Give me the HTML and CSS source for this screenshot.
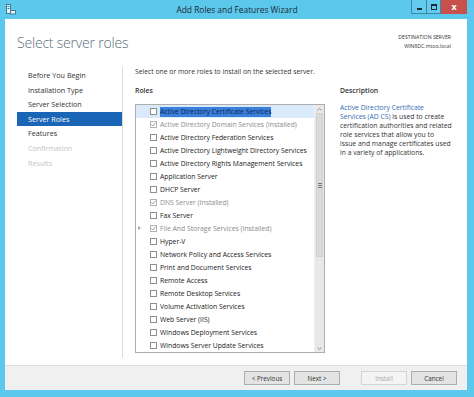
FILE: index.html
```html
<!DOCTYPE html>
<html lang="en">
<head>
    <meta charset="UTF-8">
    <title>Add Roles and Features Wizard</title>
    <link rel="stylesheet" href="styles.css">
</head>
<body>
    <div class="window">
        <div class="titlebar">
            <svg class="app-icon" width="10" height="11" viewBox="0 0 10 11">
                <rect x="0.5" y="0.5" width="4" height="9" fill="#e8f4fa" stroke="#3b7c99" stroke-width="1"/>
                <rect x="1.5" y="2" width="2" height="1" fill="#3b7c99"/>
                <rect x="1.5" y="4" width="2" height="1" fill="#3b7c99"/>
                <rect x="4.5" y="6.5" width="5" height="3.5" fill="#e8f4fa" stroke="#3b7c99" stroke-width="1"/>
            </svg>
            <div class="title">Add Roles and Features Wizard</div>
            <div class="controls">
                <span class="ctl ctl-min"><i></i></span>
                <span class="ctl ctl-max"><i></i></span>
                <span class="ctl ctl-close">x</span>
            </div>
        </div>

        <div class="client">
            <div class="header">
                <h1>Select server roles</h1>
                <div class="dest">
                    <div>DESTINATION SERVER</div>
                    <div>WIN8DC.mtoo.local</div>
                </div>
            </div>

            <div class="main">
                <ul class="steps">
                    <li>Before You Begin</li>
                    <li>Installation Type</li>
                    <li>Server Selection</li>
                    <li class="active">Server Roles</li>
                    <li>Features</li>
                    <li class="disabled">Confirmation</li>
                    <li class="disabled">Results</li>
                </ul>

                <div class="content">
                    <p class="intro">Select one or more roles to install on the selected server.</p>
                    <div class="columns">
                        <div class="roles">
                            <h2>Roles</h2>
                            <div class="listbox">
                                <ul class="role-list">
                                    <li class="selected"><span class="cb"></span><span class="label">Active Directory Certificate Services</span></li>
                                    <li class="installed"><span class="cb checked"><svg width="7" height="7" viewBox="0 0 7 7"><path d="M1.2 3.4 L2.8 5 L5.8 1.6" fill="none" stroke="#9a9a9a" stroke-width="1"/></svg></span><span class="label">Active Directory Domain Services (Installed)</span></li>
                                    <li><span class="cb"></span><span class="label">Active Directory Federation Services</span></li>
                                    <li><span class="cb"></span><span class="label">Active Directory Lightweight Directory Services</span></li>
                                    <li><span class="cb"></span><span class="label">Active Directory Rights Management Services</span></li>
                                    <li><span class="cb"></span><span class="label">Application Server</span></li>
                                    <li><span class="cb"></span><span class="label">DHCP Server</span></li>
                                    <li class="installed"><span class="cb checked"><svg width="7" height="7" viewBox="0 0 7 7"><path d="M1.2 3.4 L2.8 5 L5.8 1.6" fill="none" stroke="#9a9a9a" stroke-width="1"/></svg></span><span class="label">DNS Server (Installed)</span></li>
                                    <li><span class="cb"></span><span class="label">Fax Server</span></li>
                                    <li class="installed"><span class="expander"></span><span class="cb checked"><svg width="7" height="7" viewBox="0 0 7 7"><path d="M1.2 3.4 L2.8 5 L5.8 1.6" fill="none" stroke="#9a9a9a" stroke-width="1"/></svg></span><span class="label">File And Storage Services (Installed)</span></li>
                                    <li><span class="cb"></span><span class="label">Hyper-V</span></li>
                                    <li><span class="cb"></span><span class="label">Network Policy and Access Services</span></li>
                                    <li><span class="cb"></span><span class="label">Print and Document Services</span></li>
                                    <li><span class="cb"></span><span class="label">Remote Access</span></li>
                                    <li><span class="cb"></span><span class="label">Remote Desktop Services</span></li>
                                    <li><span class="cb"></span><span class="label">Volume Activation Services</span></li>
                                    <li><span class="cb"></span><span class="label">Web Server (IIS)</span></li>
                                    <li><span class="cb"></span><span class="label">Windows Deployment Services</span></li>
                                    <li><span class="cb"></span><span class="label">Windows Server Update Services</span></li>
                                </ul>
                                <div class="scrollbar">
                                    <div class="arrow">
                                        <svg width="5" height="3" viewBox="0 0 5 3"><path d="M0.5 2.5 L2.5 0.5 L4.5 2.5" fill="none" stroke="#7a7a7a" stroke-width="0.8"/></svg>
                                    </div>
                                    <div class="track">
                                        <div class="thumb"><span class="grip"></span></div>
                                    </div>
                                    <div class="arrow">
                                        <svg width="5" height="3" viewBox="0 0 5 3"><path d="M0.5 0.5 L2.5 2.5 L4.5 0.5" fill="none" stroke="#7a7a7a" stroke-width="0.8"/></svg>
                                    </div>
                                </div>
                            </div>
                        </div>
                        <div class="description">
                            <h2>Description</h2>
                            <p><a href="#">Active Directory Certificate<br>Services (AD CS)</a> is used to create<br>certification authorities and related<br>role services that allow you to<br>issue and manage certificates used<br>in a variety of applications.</p>
                        </div>
                    </div>
                </div>
            </div>

            <div class="footer">
                <button class="btn">&lt; Previous</button>
                <button class="btn">Next &gt;</button>
                <button class="btn btn-disabled install">Install</button>
                <button class="btn">Cancel</button>
            </div>
        </div>
    </div>
</body>
</html>
```

FILE: styles.css
```css
body {
    margin: 0;
    padding: 0;
    font-family: 'Open Sans', 'Noto Sans', sans-serif;
    color: #222;
}
.window {
    width: 474px;
    height: 397px;
    background-color: #5cc8ec;
    display: flex;
    flex-direction: column;
    overflow: hidden;
}
.titlebar {
    height: 19px;
    display: grid;
    grid-template-columns: 1fr auto 1fr;
    align-items: center;
}
.app-icon {
    margin-left: 6px;
}
.title {
    font-size: 8.4px;
    color: #1b2a33;
}
.controls {
    justify-self: end;
    align-self: start;
    display: flex;
    margin-right: 7px;
    height: 14px;
}
.ctl {
    display: flex;
    align-items: center;
    justify-content: center;
    height: 14px;
    box-sizing: border-box;
}
.ctl-min, .ctl-max {
    width: 15px;
    background-color: #62cbee;
    border: 1px solid #3a86a6;
    border-top: none;
}
.ctl-min {
    border-right: none;
}
.ctl-min i {
    display: block;
    width: 5px;
    height: 2px;
    margin-top: 4px;
    background-color: #1c2b33;
}
.ctl-max i {
    display: block;
    width: 4px;
    height: 3px;
    border: 1px solid #1c2b33;
    border-top-width: 2px;
}
.ctl-close {
    width: 26px;
    background-color: #c9514c;
    color: white;
    font-size: 9px;
    font-weight: bold;
    line-height: 12px;
}
.client {
    flex: 1;
    margin: 0 7px 7px 5px;
    background-color: white;
    display: flex;
    flex-direction: column;
}
.header {
    height: 43px;
    display: flex;
    justify-content: space-between;
    align-items: flex-start;
    padding: 0 16px 0 12px;
}
.header h1 {
    margin: 15px 0 0;
    font-size: 14px;
    font-weight: 300;
    color: #5d6d7a;
    line-height: 18px;
    letter-spacing: -0.2px;
}
.dest {
    margin-top: 14px;
    text-align: right;
    font-size: 5.2px;
    line-height: 8.5px;
    color: #333;
}
.main {
    flex: 1;
    display: flex;
}
.steps {
    list-style: none;
    width: 118px;
    box-sizing: border-box;
    margin: 5px 0 7px;
    padding: 1px 0 0 12px;
    border-right: 1px solid #dcdcdc;
    font-size: 7.2px;
}
.steps li {
    line-height: 14.6px;
    padding-left: 11px;
    color: #333;
}
.steps li.active {
    background-color: #1a65b5;
    color: white;
}
.steps li.disabled {
    color: #c4c4c4;
}
.content {
    flex: 1;
    padding-left: 12px;
    font-size: 6.8px;
}
.intro {
    margin: 4.5px 0 0;
    line-height: 9px;
    color: #333;
}
.columns {
    display: flex;
    gap: 15px;
    margin-top: 10px;
}
.roles h2, .description h2 {
    margin: 0;
    font-size: 6.9px;
    font-weight: 600;
    line-height: 9px;
    color: #333;
}
.listbox {
    margin-top: 9.5px;
    width: 190px;
    height: 249px;
    box-sizing: border-box;
    border: 1px solid #adadad;
    display: flex;
}
.role-list {
    list-style: none;
    margin: 0;
    padding: 0;
    flex: 1;
}
.role-list li {
    height: 13px;
    display: flex;
    align-items: center;
    padding-left: 14px;
    position: relative;
    color: #222;
}
.role-list li.selected {
    background-color: #dbeafb;
}
.role-list li.selected .label {
    background-color: #3a7fd9;
    color: #0d1f56;
}
.role-list li.installed {
    color: #8c8c8c;
}
.cb {
    width: 7px;
    height: 7px;
    box-sizing: border-box;
    border: 1px solid #8f8f8f;
    background-color: white;
    margin-right: 3px;
    flex-shrink: 0;
    display: flex;
}
.cb.checked {
    border-color: #b4b4b4;
}
.cb svg {
    margin: -1px;
}
.label {
    white-space: nowrap;
    line-height: 10px;
}
.expander {
    position: absolute;
    left: 2px;
    top: 4px;
    width: 0;
    height: 0;
    border-top: 2.5px solid transparent;
    border-bottom: 2.5px solid transparent;
    border-left: 3px solid #a6a6a6;
}
.scrollbar {
    width: 9px;
    background-color: #e8e8e8;
    border-left: 1px solid #f0f0f0;
    display: flex;
    flex-direction: column;
}
.arrow {
    height: 8px;
    display: flex;
    align-items: center;
    justify-content: center;
}
.track {
    flex: 1;
    padding: 0 1px;
}
.thumb {
    height: 142px;
    background-color: #dadada;
    border: 1px solid #d0d0d0;
    display: flex;
    align-items: center;
    justify-content: center;
}
.grip {
    width: 4px;
    height: 3px;
    border-top: 1px solid #777;
    border-bottom: 1px solid #777;
    background: linear-gradient(#777, #777) center / 4px 1px no-repeat;
}
.description p {
    margin: 8px 0 0;
    line-height: 9px;
    color: #333;
    white-space: nowrap;
}
.description a {
    color: #2f6eb4;
    text-decoration: none;
}
.footer {
    height: 25px;
    box-sizing: border-box;
    border-top: 1px solid #dfdfdf;
    background-color: #f0f0f0;
    display: flex;
    align-items: center;
    justify-content: flex-end;
    padding-right: 10px;
}
.btn {
    width: 46px;
    height: 14px;
    padding: 0;
    margin-left: 4px;
    font-family: 'Open Sans', 'Noto Sans', sans-serif;
    font-size: 6.3px;
    color: #333;
    background-color: #e3e3e3;
    border: 1px solid #acacac;
}
.btn-disabled {
    background-color: #f4f4f4;
    border-color: #d4d4d4;
    color: #a8a8a8;
}
.install {
    margin-left: 21px;
}
```
